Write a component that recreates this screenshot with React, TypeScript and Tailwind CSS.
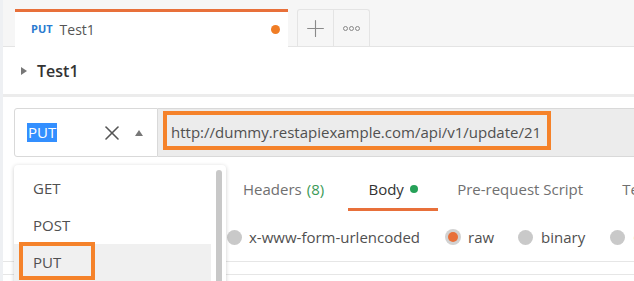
import { X, Plus } from "lucide-react";

const methods = ["GET", "POST", "PUT"];

function Radio({ on }: { on?: boolean }) {
  return on ? (
    <span className="shrink-0 w-[16px] h-[16px] rounded-full bg-[#d2d2d2] flex items-center justify-center">
      <span className="w-[10px] h-[10px] rounded-full bg-[#e8703a]" />
    </span>
  ) : (
    <span className="shrink-0 block w-[15px] h-[15px] rounded-full bg-[#c9c9c9]" />
  );
}

export default function App() {
  return (
    <div className="relative w-[634px] h-[281px] overflow-hidden bg-white border-l-[3px] border-[#eef0f3] font-['Open_Sans',sans-serif] text-[#505050]">
      {/* tab bar */}
      <div className="h-[47px] bg-[#f6f6f6] border-b border-[#e4e4e4] flex items-end pl-[12px]">
        <div className="w-[273px] h-[38px] -mb-px bg-white border-t-[3px] border-[#e8703a] flex items-center pl-[16px] pr-[8px]">
          <span className="text-[11px] font-bold text-[#2a7bd0] mr-[7px]">PUT</span>
          <span className="text-[14px] text-[#555]">Test1</span>
          <span className="ml-auto w-[9px] h-[9px] rounded-full bg-[#f07d25]" />
        </div>
        <div className="ml-[9px] flex h-[37px]">
          <div className="w-[37px] border border-b-0 border-[#e4e4e4] rounded-tl-[3px] flex items-center justify-center text-[#8a8a8a]">
            <Plus size={27} strokeWidth={1} />
          </div>
          <div className="w-[36px] border border-l-0 border-b-0 border-[#e4e4e4] rounded-tr-[3px] flex items-center justify-center gap-[1px]">
            <span className="w-[5px] h-[5px] rounded-full border border-[#888]" />
            <span className="w-[5px] h-[5px] rounded-full border border-[#888]" />
            <span className="w-[5px] h-[5px] rounded-full border border-[#888]" />
          </div>
        </div>
      </div>

      {/* request name */}
      <div className="h-[50px] flex items-center pl-[18px] border-b-[3px] border-[#ececec]">
        <span className="w-0 h-0 border-y-[4px] border-y-transparent border-l-[6px] border-l-[#777] mr-[10px]" />
        <span className="text-[16px] font-semibold text-[#333]">Test1</span>
      </div>

      {/* url row */}
      <div className="mt-[11px] pl-[11px] flex h-[49px] text-[15px]">
        <div className="w-[144px] border border-[#d9d9d9] rounded-l-[3px] flex items-center pl-[12px] pr-[14px]">
          <span className="bg-[#338fff] text-white leading-[19px] px-px">PUT</span>
          <X size={24} strokeWidth={1.6} className="ml-auto text-[#555]" />
          <span className="ml-[11px] w-0 h-0 border-x-[4px] border-x-transparent border-b-[6px] border-b-[#777]" />
        </div>
        <div className="flex-1 bg-[#ececec] border-y border-[#d9d9d9] flex items-center pl-[13px] text-[#505050] whitespace-nowrap">
          http://dummy.restapiexample.com/api/v1/update/21
        </div>
      </div>

      {/* tabs */}
      <div className="h-[54px] flex items-end pl-[240px] text-[15px] text-[#707070] whitespace-nowrap">
        <div className="shrink-0 h-[45px] pt-[12px] flex items-start">
          Headers <span className="ml-[5px] text-[#3b9a57]">(8)</span>
        </div>
        <div className="shrink-0 ml-[24px] w-[90px] h-[45px] flex items-start justify-center pt-[12px] border-b-[3px] border-[#e8703a] text-[#333]">
          Body <span className="ml-[6px] mt-[7px] w-[8px] h-[8px] rounded-full bg-[#26a158]" />
        </div>
        <div className="shrink-0 ml-[19px] h-[45px] pt-[12px]">Pre-request Script</div>
        <div className="shrink-0 ml-[39px] h-[45px] pt-[12px]">Tests</div>
      </div>

      {/* body type radios */}
      <div className="h-[51px] border-b border-[#e6e6e6] flex items-center pl-[224px] pt-[2px] text-[15px] text-[#505050] whitespace-nowrap">
        <Radio />
        <span className="ml-[7px]">x-www-form-urlencoded</span>
        <span className="ml-[25px]"><Radio on /></span>
        <span className="ml-[7px]">raw</span>
        <span className="ml-[24px]"><Radio /></span>
        <span className="ml-[8px]">binary</span>
        <span className="ml-[25px]"><Radio /></span>
        <span className="ml-[8px]">GraphQL</span>
      </div>
      <div className="h-[13px] border-b border-[#e6e6e6]" />

      {/* method dropdown */}
      <div className="absolute left-[11px] top-[165px] w-[212px] h-[130px] bg-white rounded-[4px] shadow-[0_1px_4px_rgba(0,0,0,0.2)] pt-[5px] text-[15px] text-[#505050]">
        {methods.map((m) => (
          <div
            key={m}
            className={`h-[37px] w-[197px] flex items-center pl-[19px] ${m === "PUT" ? "bg-[#f0f0f0]" : ""}`}
          >
            {m}
          </div>
        ))}
        <div className="absolute right-[4px] top-[5px] w-[6px] h-[120px] rounded-full bg-[#c8c8c8]" />
      </div>

      {/* annotation boxes */}
      <div className="absolute left-[160px] top-[111px] w-[388px] h-[39px] border-[4px] border-[#f5822a]" />
      <div className="absolute left-[16px] top-[242px] w-[76px] h-[38px] border-[4px] border-[#f5822a]" />
    </div>
  );
}
